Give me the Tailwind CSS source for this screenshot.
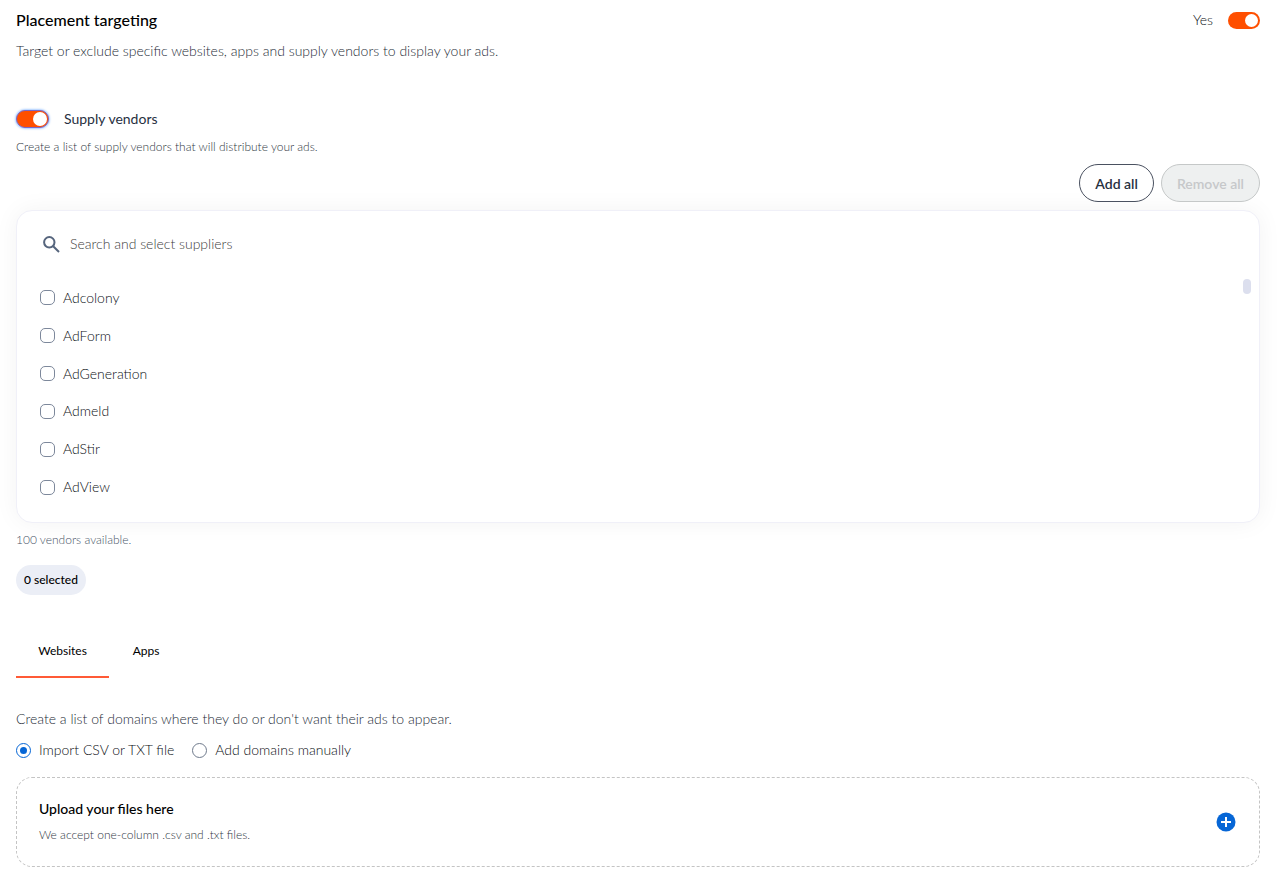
<!DOCTYPE html>
<html lang="en">
<head>
<meta charset="utf-8">
<meta name="viewport" content="width=device-width, initial-scale=1">
<title>Placement targeting</title>
<script src="https://cdn.jsdelivr.net/npm/@tailwindcss/browser@4"></script>
</head>
<body class="bg-white font-['Lato',sans-serif] text-sm leading-5 font-light text-[#0c0f14]">
<main class="px-4 pt-[10px] pr-5 pb-5">
  <header class="flex items-center justify-between">
    <h1 class="text-base leading-5 font-medium text-black">Placement targeting</h1>
    <label class="flex items-center gap-[15px]">Yes
      <input type="checkbox" role="switch" checked class="flex h-[17px] w-8 appearance-none items-center justify-end rounded-full bg-[#ff4f00] px-[2px] before:size-[13px] before:rounded-full before:bg-white">
    </label>
  </header>
  <p class="mt-[11px] text-[#262d38]">Target or exclude specific websites, apps and supply vendors to display your ads.</p>

  <section class="mt-12">
    <label class="flex items-center gap-[15px] font-normal text-[#27303f]">
      <input type="checkbox" role="switch" checked class="flex h-[18px] w-[33px] appearance-none items-center justify-end rounded-full border border-[#7a68c8] bg-[#ff4f00] px-px shadow-[0_0_2px_1px_#a9ccff] before:size-[14px] before:rounded-full before:bg-white">
      Supply vendors
    </label>
    <p class="mt-2 text-xs leading-5 text-[#2f3743]">Create a list of supply vendors that will distribute your ads.</p>
    <div class="mt-[7px] flex justify-end gap-[7px]">
      <button type="button" class="h-[38px] rounded-full border border-[#4a5160] bg-white px-[15px] pt-[2px] font-semibold text-[#27303f]">Add all</button>
      <button type="button" disabled class="h-[38px] rounded-full border border-[#c5c8c8] bg-[#eef0f0] px-[15px] pt-[2px] font-semibold text-[#c6c8ca]">Remove all</button>
    </div>

    <div class="mt-2 rounded-[16px] border border-[#f0f0f8] bg-white pt-[15px] pb-4 pl-[23px] shadow-[0_0_24px_rgba(0,0,0,0.05)]">
      <div class="flex h-9 items-center gap-[10px] pl-[3px]">
        <svg class="size-[17px] shrink-0" viewBox="0 0 17 17" fill="none" stroke="#56657d" stroke-width="2" aria-hidden="true"><circle cx="6.3" cy="6.3" r="5.2"/><path d="M10.2 10.2 16 16"/></svg>
        <input type="text" aria-label="Search and select suppliers" placeholder="Search and select suppliers" class="w-full outline-none placeholder:text-[#404040]">
      </div>
      <div class="mt-[17px] flex justify-between pr-2">
        <div class="grid h-[227px] grid-rows-6">
          <label class="flex items-center gap-2"><input type="checkbox" class="size-[15px] appearance-none rounded-[5px] border border-[#7d889b]">Adcolony</label>
          <label class="flex items-center gap-2"><input type="checkbox" class="size-[15px] appearance-none rounded-[5px] border border-[#7d889b]">AdForm</label>
          <label class="flex items-center gap-2"><input type="checkbox" class="size-[15px] appearance-none rounded-[5px] border border-[#7d889b]">AdGeneration</label>
          <label class="flex items-center gap-2"><input type="checkbox" class="size-[15px] appearance-none rounded-[5px] border border-[#7d889b]">Admeld</label>
          <label class="flex items-center gap-2"><input type="checkbox" class="size-[15px] appearance-none rounded-[5px] border border-[#7d889b]">AdStir</label>
          <label class="flex items-center gap-2"><input type="checkbox" class="size-[15px] appearance-none rounded-[5px] border border-[#7d889b]">AdView</label>
        </div>
        <div class="h-[15px] w-2 rounded-full bg-[#dcdfee]"></div>
      </div>
    </div>
    <p class="mt-[7px] text-xs leading-5 text-[#465366]">100 vendors available.</p>
    <span class="mt-[15px] flex h-[30px] w-fit items-center rounded-full bg-[#ebeef6] px-2 text-xs font-medium text-black">0 selected</span>
  </section>

  <div role="tablist" class="mt-[30px] flex text-xs text-black">
    <button type="button" role="tab" aria-selected="true" class="h-[53px] w-[93px] border-b-2 border-[#ff5a36] font-normal">Websites</button>
    <button type="button" role="tab" aria-selected="false" class="h-[53px] w-[74px] border-b-2 border-transparent font-normal">Apps</button>
  </div>

  <section class="mt-[31px]">
    <p class="text-[#262d38]">Create a list of domains where they do or don't want their ads to appear.</p>
    <div class="mt-[11px] flex gap-[18px]">
      <label class="flex items-center gap-2"><input type="radio" name="source" checked class="grid size-[15px] appearance-none place-items-center rounded-full border border-[#0666d6] before:size-[7px] before:rounded-full before:bg-[#0666d6]">Import CSV or TXT file</label>
      <label class="flex items-center gap-2"><input type="radio" name="source" class="size-[15px] appearance-none rounded-full border border-[#6f7a8c]">Add domains manually</label>
    </div>
    <div class="mt-[17px] flex items-center justify-between rounded-[16px] border border-dashed border-[#c4c4c4] py-[21px] pr-[23px] pl-[22px]">
      <div>
        <h2 class="font-medium text-black">Upload your files here</h2>
        <p class="mt-[6px] text-xs leading-5 text-[#2f3743]">We accept one-column .csv and .txt files.</p>
      </div>
      <button type="button" aria-label="Upload files"><svg class="size-5" viewBox="0 0 20 20" aria-hidden="true"><circle cx="10" cy="10" r="9.5" fill="#0666d6"/><path d="M10 5v10M5 10h10" stroke="#fff" stroke-width="2"/></svg></button>
    </div>
  </section>
</main>
</body>
</html>
